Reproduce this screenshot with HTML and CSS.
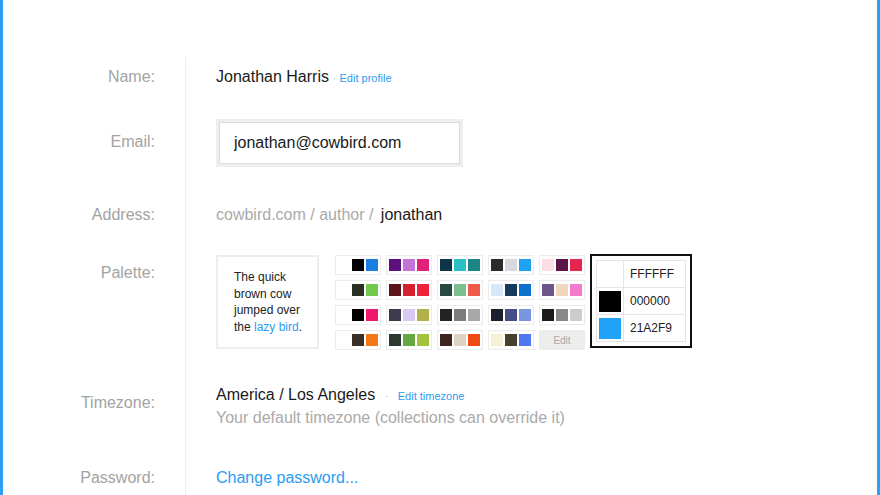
FILE: index.html
```html
<!DOCTYPE html>
<html lang="en">
<head>
<meta charset="UTF-8" />
<meta name="viewport" content="width=device-width, initial-scale=1" />
<title>Account settings</title>
<link rel="stylesheet" href="styles.css">
</head>
<body>

<div class="page">
  <div class="row row-name">
    <div class="label">Name:</div>
    <div class="value">
      <span class="strong">Jonathan Harris</span>
      <span class="dot">·</span>
      <a class="small-link" href="#">Edit profile</a>
    </div>
  </div>

  <div class="row row-email">
    <div class="label">Email:</div>
    <div class="value">
      <div class="field"><input type="text" value="jonathan@cowbird.com" /></div>
    </div>
  </div>

  <div class="row row-address">
    <div class="label">Address:</div>
    <div class="value">
      <span class="muted">cowbird.com / author / </span>
      <span class="strong slug">jonathan</span>
    </div>
  </div>

  <div class="row row-palette">
    <div class="label">Palette:</div>
    <div class="value palette">
      <div class="preview">
        The quick<br />brown cow<br />jumped over<br />the <a href="#">lazy bird</a>.
      </div>

      <div class="swatches">
        <div class="swatch"><i style="background:#fff"></i><i style="background:#000"></i><i style="background:#1a7ee0"></i></div>
        <div class="swatch"><i style="background:#5d0f7e"></i><i style="background:#c275d6"></i><i style="background:#e0217a"></i></div>
        <div class="swatch"><i style="background:#0f3349"></i><i style="background:#2ebfc4"></i><i style="background:#1c8585"></i></div>
        <div class="swatch"><i style="background:#2b2b2b"></i><i style="background:#d5d8dc"></i><i style="background:#1fa3f0"></i></div>
        <div class="swatch"><i style="background:#fbdde6"></i><i style="background:#5a1448"></i><i style="background:#e4254f"></i></div>

        <div class="swatch"><i style="background:#fff"></i><i style="background:#283024"></i><i style="background:#72c94a"></i></div>
        <div class="swatch"><i style="background:#5c141a"></i><i style="background:#d62030"></i><i style="background:#f0213a"></i></div>
        <div class="swatch"><i style="background:#264840"></i><i style="background:#7cbf8f"></i><i style="background:#ef5a4c"></i></div>
        <div class="swatch"><i style="background:#d6e8f8"></i><i style="background:#153a5c"></i><i style="background:#0a72cc"></i></div>
        <div class="swatch"><i style="background:#6d5489"></i><i style="background:#efd6bd"></i><i style="background:#f27bcb"></i></div>

        <div class="swatch"><i style="background:#fff"></i><i style="background:#000"></i><i style="background:#f0186e"></i></div>
        <div class="swatch"><i style="background:#3d3a4c"></i><i style="background:#d8c8f4"></i><i style="background:#b3b24a"></i></div>
        <div class="swatch"><i style="background:#232323"></i><i style="background:#7c7c7c"></i><i style="background:#a8a8a8"></i></div>
        <div class="swatch"><i style="background:#1c1f2d"></i><i style="background:#454f85"></i><i style="background:#7896e0"></i></div>
        <div class="swatch"><i style="background:#1b1b1b"></i><i style="background:#888"></i><i style="background:#ccc"></i></div>

        <div class="swatch"><i style="background:#fff"></i><i style="background:#3b3028"></i><i style="background:#f47816"></i></div>
        <div class="swatch"><i style="background:#2b3a2e"></i><i style="background:#65a843"></i><i style="background:#a3c43a"></i></div>
        <div class="swatch"><i style="background:#3d2520"></i><i style="background:#dcd2c6"></i><i style="background:#f04a14"></i></div>
        <div class="swatch"><i style="background:#f4f1d4"></i><i style="background:#47402f"></i><i style="background:#4f78f0"></i></div>
        <button class="edit-btn">Edit</button>
      </div>

      <div class="picked">
        <table>
          <tr><td class="chip"><i style="background:#fff"></i></td><td class="hex">FFFFFF</td></tr>
          <tr><td class="chip"><i style="background:#000"></i></td><td class="hex">000000</td></tr>
          <tr><td class="chip"><i style="background:#21a2f9"></i></td><td class="hex">21A2F9</td></tr>
        </table>
      </div>
    </div>
  </div>

  <div class="row row-timezone">
    <div class="label">Timezone:</div>
    <div class="value">
      <div>
        <span class="strong">America / Los Angeles</span>
        <span class="dot dot-wide">·</span>
        <a class="small-link" href="#">Edit timezone</a>
      </div>
      <div class="muted">Your default timezone (collections can override it)</div>
    </div>
  </div>

  <div class="row row-password">
    <div class="label">Password:</div>
    <div class="value">
      <a class="big-link" href="#">Change password...</a>
    </div>
  </div>
</div>

</body>
</html>
```

FILE: styles.css
```css
html, body { margin: 0; padding: 0; background: #fff; }
body { font-family: "Liberation Sans", Arial, sans-serif; font-size: 16px; line-height: 20px; color: #1a1a1a; }
a { color: #2b9cf2; text-decoration: none; }

.page { height: 495px; overflow: hidden; border-left: 3px solid #2a9ff5; border-right: 3px solid #2a9ff5; padding-top: 57px; box-sizing: border-box; display: flex; flex-direction: column; }

.row { display: grid; grid-template-columns: 182px 1fr; }
.label { color: #a3a3a3; text-align: right; padding-right: 30px; }
.value { border-left: 1px solid #eeeeee; padding-left: 30px; }

.row-name .label, .row-name .value { padding-top: 10px; }
.row-email .label { padding-top: 44px; }
.row-email .value { padding-top: 31px; }
.row-address .label, .row-address .value { padding-top: 38px; }
.row-palette .label { padding-top: 38px; }
.row-palette .value { padding-top: 29px; }
.row-timezone { line-height: 22px; }
.row-timezone .label { padding-top: 42px; }
.row-timezone .value { padding-top: 34px; }
.row-password { flex: 1; line-height: 22px; }
.row-password .label, .row-password .value { padding-top: 38px; }

.dot { color: #bbb; font-size: 11px; margin: 0 -1px; }
.dot-wide { margin: 0 5px; }
.small-link { font-size: 11px; }
.big-link { font-size: 16px; }
.muted { color: #aaa; }
.slug { margin-left: 3px; }

.field { display: inline-block; border: 3px solid #eeeeee; }
.field input { display: block; width: 241px; height: 42px; box-sizing: border-box; border: 1px solid #dcdcdc; padding: 0 14px; font-family: "Liberation Sans", Arial, sans-serif; font-size: 16px; color: #1a1a1a; outline: none; }

.palette { display: flex; align-items: flex-start; }
.preview { width: 103px; height: 94px; box-sizing: border-box; margin-top: 1px; border: 2px solid #eeeeee; padding: 12px 0 0 16px; font-size: 12px; line-height: 16.5px; color: #222; }

.swatches { display: grid; grid-template-columns: repeat(5, 46px); grid-auto-rows: 20px; column-gap: 5px; row-gap: 5px; margin: 1px 0 0 16px; }
.swatch { display: flex; gap: 2px; padding: 3px 2px; border: 1px solid #ececec; box-sizing: border-box; }
.swatch i { display: block; width: 12px; height: 12px; }
.edit-btn { border: none; background: #ececec; color: #aaa; font-family: "Liberation Sans", Arial, sans-serif; font-size: 10px; padding: 0; }

.picked { margin-left: 5px; border: 2px solid #111; padding: 4px; }
.picked table { border-collapse: collapse; width: 90px; }
.picked td { border: 1px solid #e5e5e5; height: 26px; padding: 0; }
.picked .chip { width: 26px; }
.picked .chip i { display: block; width: 22px; height: 21px; margin: 0 auto; }
.picked .hex { font-size: 12px; color: #222; padding-left: 6px; }
```
